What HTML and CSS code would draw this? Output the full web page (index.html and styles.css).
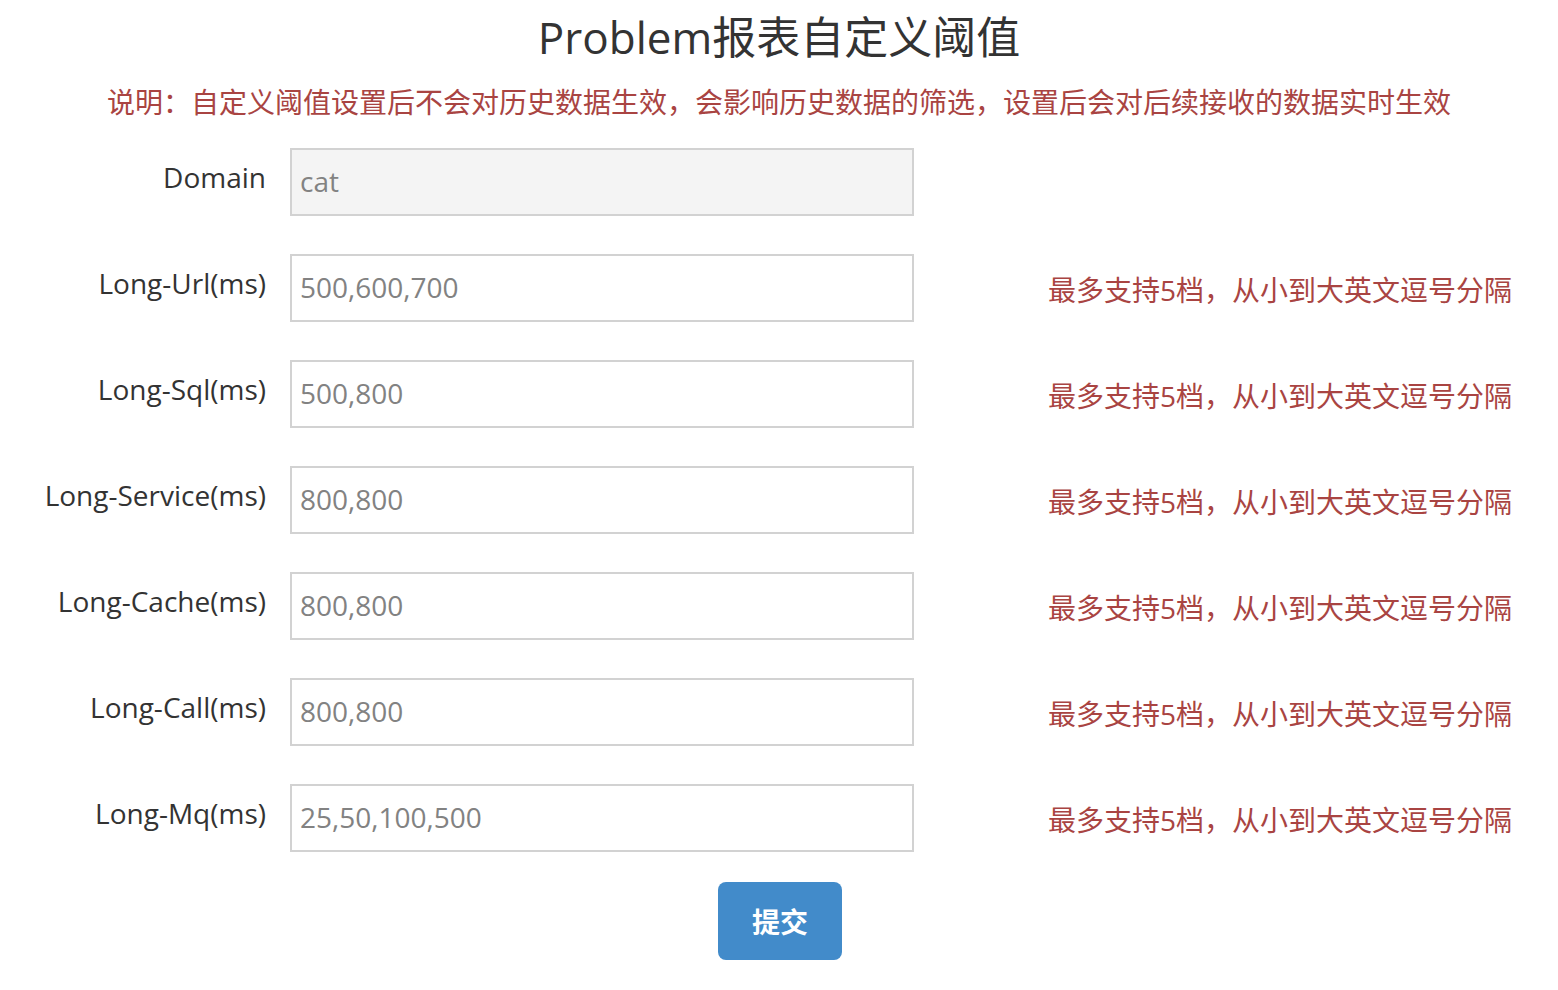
FILE: index.html
```html
<!DOCTYPE html>
<html lang="zh-CN">
<head>
<meta charset="utf-8">
<title>Problem报表自定义阈值</title>
<link rel="stylesheet" href="styles.css">
</head>
<body>
<div class="page">
  <h1 class="title">Problem报表自定义阈值</h1>
  <p class="note">说明：自定义阈值设置后不会对历史数据生效，会影响历史数据的筛选，设置后会对后续接收的数据实时生效</p>
  <form class="form">
    <div class="row">
      <label class="label">Domain</label>
      <input class="field field-readonly" type="text" value="cat" readonly>
    </div>
    <div class="row">
      <label class="label">Long-Url(ms)</label>
      <input class="field" type="text" value="500,600,700">
      <span class="hint">最多支持5档，从小到大英文逗号分隔</span>
    </div>
    <div class="row">
      <label class="label">Long-Sql(ms)</label>
      <input class="field" type="text" value="500,800">
      <span class="hint">最多支持5档，从小到大英文逗号分隔</span>
    </div>
    <div class="row">
      <label class="label">Long-Service(ms)</label>
      <input class="field" type="text" value="800,800">
      <span class="hint">最多支持5档，从小到大英文逗号分隔</span>
    </div>
    <div class="row">
      <label class="label">Long-Cache(ms)</label>
      <input class="field" type="text" value="800,800">
      <span class="hint">最多支持5档，从小到大英文逗号分隔</span>
    </div>
    <div class="row">
      <label class="label">Long-Call(ms)</label>
      <input class="field" type="text" value="800,800">
      <span class="hint">最多支持5档，从小到大英文逗号分隔</span>
    </div>
    <div class="row">
      <label class="label">Long-Mq(ms)</label>
      <input class="field" type="text" value="25,50,100,500">
      <span class="hint">最多支持5档，从小到大英文逗号分隔</span>
    </div>
    <div class="actions">
      <button class="btn" type="button">提交</button>
    </div>
  </form>
</div>
</body>
</html>
```

FILE: styles.css
```css
html, body {
  margin: 0;
  padding: 0;
  background: #ffffff;
}

body {
  font-family: "Open Sans", "Noto Sans CJK SC", sans-serif;
  color: #333333;
}

.page {
  width: 1558px;
}

.title {
  margin: 0;
  padding-top: 7px;
  font-size: 44px;
  font-weight: 400;
  line-height: 60px;
  text-align: center;
  color: #333333;
}

.note {
  margin: 15px 0 0 0;
  font-size: 28px;
  line-height: 40px;
  text-align: center;
  color: #a94442;
}

.form {
  margin-top: 26px;
  display: flex;
  flex-direction: column;
  gap: 38px;
}

.row {
  display: flex;
  align-items: flex-start;
  height: 68px;
}

.label {
  width: 266px;
  flex: none;
  padding-top: 9px;
  font-size: 28px;
  line-height: 40px;
  text-align: right;
  color: #333333;
}

.field {
  flex: none;
  box-sizing: border-box;
  width: 624px;
  height: 68px;
  margin: 0 0 0 24px;
  padding: 0 8px 2px 8px;
  border: 2px solid #d2d2d2;
  border-radius: 0;
  background: #ffffff;
  font-family: "Open Sans", "Noto Sans CJK SC", sans-serif;
  font-size: 28px;
  color: #828282;
  outline: none;
}

.field-readonly {
  background: #f4f4f4;
}

.hint {
  margin-left: 134px;
  padding-top: 16px;
  font-size: 28px;
  line-height: 40px;
  color: #a94442;
  white-space: nowrap;
}

.actions {
  display: flex;
  justify-content: center;
  margin-top: -8px;
  padding-left: 2px;
}

.btn {
  width: 124px;
  height: 78px;
  border: none;
  border-radius: 8px;
  background: #428bca;
  color: #ffffff;
  font-family: "Open Sans", "Noto Sans CJK SC", sans-serif;
  font-size: 28px;
  font-weight: 700;
  cursor: pointer;
}
```
